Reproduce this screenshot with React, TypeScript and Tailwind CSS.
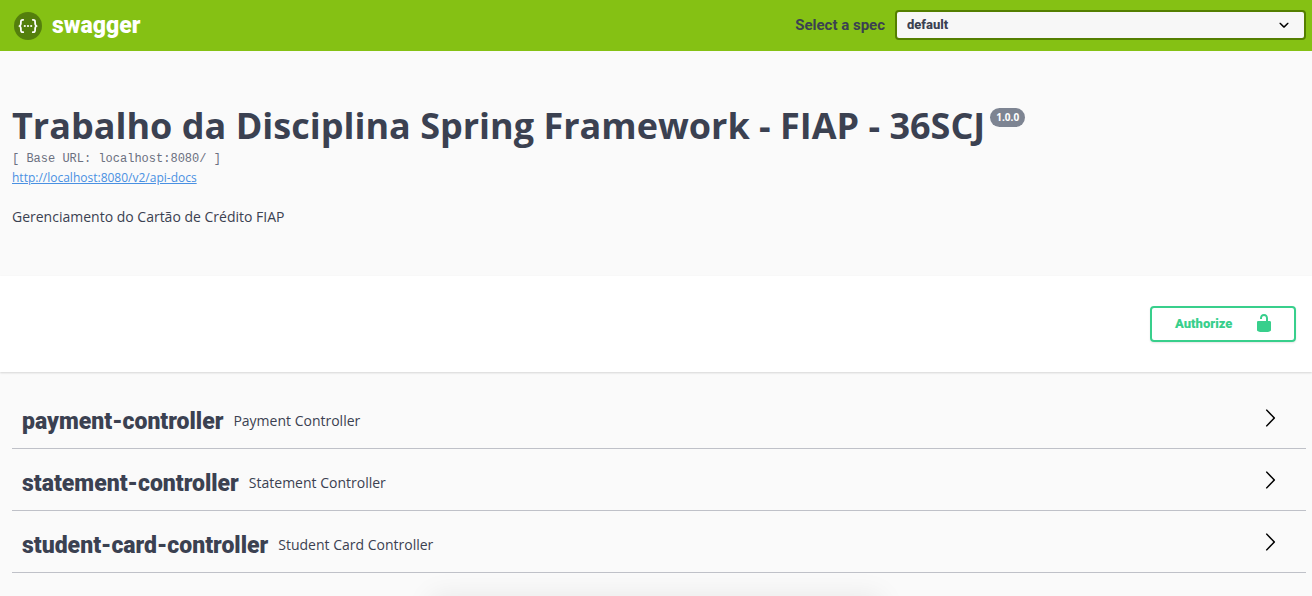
import React from "react";

type Tag = { name: string; description: string };

const tags: Tag[] = [
  { name: "payment-controller", description: "Payment Controller" },
  { name: "statement-controller", description: "Statement Controller" },
  { name: "student-card-controller", description: "Student Card Controller" },
];

function Logo() {
  return (
    <a href="#" className="flex items-center gap-2 pt-0.5 text-white">
      <svg width="32" height="32" viewBox="0 0 32 32" fill="none" aria-hidden="true">
        <circle cx="16" cy="16" r="14" fill="#547f0d" />
        <g stroke="#fff" strokeWidth="1.8" strokeLinecap="round" strokeLinejoin="round">
          <path d="M11.2 9.8c-1.9-.1-2.4.6-2.3 2.6.1 1.9.1 3.2-1.5 3.6 1.6.4 1.6 1.7 1.5 3.6-.1 2 .4 2.7 2.3 2.6" />
          <path d="M20.8 9.8c1.9-.1 2.4.6 2.3 2.6-.1 1.9-.1 3.2 1.5 3.6-1.6.4-1.6 1.7-1.5 3.6.1 2-.4 2.7-2.3 2.6" />
        </g>
        <g fill="#fff">
          <circle cx="12.8" cy="16" r="1.1" />
          <circle cx="16" cy="16" r="1.1" />
          <circle cx="19.2" cy="16" r="1.1" />
        </g>
      </svg>
      <span className="font-['Roboto',sans-serif] text-[23px] leading-8 font-black">swagger</span>
    </a>
  );
}

function Topbar() {
  return (
    <header className="flex h-[51px] items-center justify-between bg-[#85c114] pr-1.5 pb-px pl-3">
      <Logo />
      <div className="flex w-[511px] items-center gap-2.5">
        <label
          htmlFor="spec"
          className="flex-1 text-right font-['Roboto',sans-serif] text-[15px] font-bold whitespace-nowrap text-[#3b4151]"
        >
          Select a spec
        </label>
        <div className="relative w-[411px]">
          <select
            id="spec"
            className="block h-[30px] w-full appearance-none rounded border-2 border-[#547f00] bg-[#f7f7f7] pl-2.5 font-['Roboto',sans-serif] text-[13px] font-extrabold text-[#3b4151]"
          >
            <option>default</option>
          </select>
          <svg
            className="pointer-events-none absolute top-[5px] right-3"
            width="20"
            height="20"
            viewBox="0 0 20 20"
            aria-hidden="true"
          >
            <path d="M13.418 7.859c.271-.268.709-.268.978 0 .27.268.272.701 0 .969l-3.908 3.83c-.27.268-.707.268-.979 0l-3.908-3.83c-.27-.267-.27-.701 0-.969.271-.268.709-.268.978 0L10 11l3.418-3.141z" />
          </svg>
        </div>
      </div>
    </header>
  );
}

function Info() {
  return (
    <section className="px-3 pt-[50px] pb-[45px] text-[#3b4151]">
      <h1 className="flex items-start gap-[5px] text-[36px] leading-[49px] font-bold">
        Trabalho da Disciplina Spring Framework - FIAP - 36SCJ
        <span className="mt-[7px] rounded-full bg-[#7d8492] px-1.5 text-[10px] leading-[19px] text-white">1.0.0</span>
      </h1>
      <p className="font-['Liberation_Mono',monospace] text-[12px] leading-[18px] text-[#6b7080]">
        [ Base URL: localhost:8080/ ]
      </p>
      <a href="#" className="mt-0.5 block w-fit text-[12px] leading-4 text-[#4990e2] underline">
        http://localhost:8080/v2/api-docs
      </a>
      <p className="mt-[17px] py-1 text-[14px] leading-5">Gerenciamento do Cartão de Crédito FIAP</p>
    </section>
  );
}

function Authorize() {
  return (
    <section className="relative flex justify-end bg-white py-[30px] pr-4 shadow-[0_1px_2px_rgba(0,0,0,0.15)]">
      <button className="flex h-9 w-[146px] items-center justify-between rounded border-2 border-[#38cf8c] pr-5 pl-[23px] font-['Roboto',sans-serif] text-[13px] font-black text-[#38cf8c] shadow-[0_1px_2px_rgba(0,0,0,0.1)]">
        Authorize
        <svg width="20" height="20" viewBox="0 0 20 20" fill="currentColor" className="mb-0.5" aria-hidden="true">
          <path d="M15.8 8H14V5.6C14 2.703 12.665 1 10 1 7.334 1 6 2.703 6 5.6V6h2v-.801C8 3.754 8.797 3 10 3c1.203 0 2 .754 2 2.199V8H4c-.553 0-1 .646-1 1.199V17c0 .549.428 1.139.951 1.307l1.197.387C5.672 18.861 6.55 19 7.1 19h5.8c.549 0 1.428-.139 1.951-.307l1.196-.387c.524-.167.953-.757.953-1.306V9.199C17 8.646 16.352 8 15.8 8z" />
        </svg>
      </button>
    </section>
  );
}

function TagRow({ name, description }: Tag) {
  return (
    <li className="flex h-[62px] items-center border-b border-[#bfc1c8] pt-1.5 pr-[26px] pl-2.5">
      <h2 className="pt-0.5 font-['Roboto',sans-serif] text-[23px] leading-8 font-black">{name}</h2>
      <p className="flex-1 px-2.5 text-[14px] leading-5">{description}</p>
      <button aria-label={`Expand ${name}`} className="mb-1.5 text-black">
        <svg width="20" height="20" viewBox="0 0 20 20" fill="currentColor" aria-hidden="true">
          <path d="M13.25 10L6.109 2.58c-.268-.27-.268-.707 0-.979.268-.27.701-.27.969 0l7.83 7.908c.268.271.268.709 0 .979l-7.83 7.908c-.268.271-.701.27-.969 0-.268-.269-.268-.707 0-.979L13.25 10z" />
        </svg>
      </button>
    </li>
  );
}

export default function App() {
  return (
    <div className="relative min-h-screen overflow-hidden bg-[#fafafa] font-['Open_Sans',sans-serif]">
      <Topbar />
      <Info />
      <Authorize />
      <ul className="pt-[15px] pr-1.5 pl-3 text-[#3b4151]">
        {tags.map((tag) => (
          <TagRow key={tag.name} {...tag} />
        ))}
      </ul>
      <div className="pointer-events-none absolute top-full left-1/2 h-10 w-[450px] -translate-x-1/2 shadow-[0_0_28px_rgba(0,0,0,0.08)]" />
    </div>
  );
}
